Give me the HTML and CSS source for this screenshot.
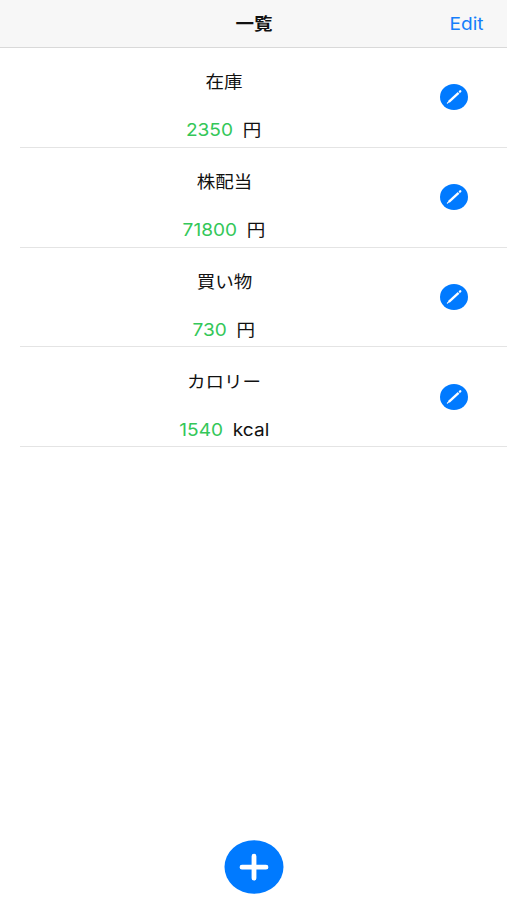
FILE: index.html
```html
<!DOCTYPE html>
<html lang="ja">
<head>
    <meta charset="UTF-8">
    <meta name="viewport" content="width=device-width, initial-scale=1.0">
    <title>一覧</title>
    <link rel="stylesheet" href="styles.css">
</head>
<body>
    <header class="navbar">
        <h1 class="title">一覧</h1>
        <a class="edit">Edit</a>
    </header>
    <ul class="list">
        <li class="item">
            <div class="info">
                <p class="name">在庫</p>
                <p class="amount"><span class="number">2350</span><span>円</span></p>
            </div>
            <svg class="pencil" viewBox="0 0 28 26"><ellipse cx="14" cy="13" rx="14" ry="13"/><path class="body" d="M8.8 17.8L18.6 8.8"/><path class="tip" d="M7.4 19.2L9 17.6"/><path class="eraser" d="M19.9 7.6L20.3 7.2"/></svg>
        </li>
        <li class="item">
            <div class="info">
                <p class="name">株配当</p>
                <p class="amount"><span class="number">71800</span><span>円</span></p>
            </div>
            <svg class="pencil" viewBox="0 0 28 26"><ellipse cx="14" cy="13" rx="14" ry="13"/><path class="body" d="M8.8 17.8L18.6 8.8"/><path class="tip" d="M7.4 19.2L9 17.6"/><path class="eraser" d="M19.9 7.6L20.3 7.2"/></svg>
        </li>
        <li class="item">
            <div class="info">
                <p class="name">買い物</p>
                <p class="amount"><span class="number">730</span><span>円</span></p>
            </div>
            <svg class="pencil" viewBox="0 0 28 26"><ellipse cx="14" cy="13" rx="14" ry="13"/><path class="body" d="M8.8 17.8L18.6 8.8"/><path class="tip" d="M7.4 19.2L9 17.6"/><path class="eraser" d="M19.9 7.6L20.3 7.2"/></svg>
        </li>
        <li class="item">
            <div class="info">
                <p class="name">カロリー</p>
                <p class="amount"><span class="number">1540</span><span class="unit-latin">kcal</span></p>
            </div>
            <svg class="pencil" viewBox="0 0 28 26"><ellipse cx="14" cy="13" rx="14" ry="13"/><path class="body" d="M8.8 17.8L18.6 8.8"/><path class="tip" d="M7.4 19.2L9 17.6"/><path class="eraser" d="M19.9 7.6L20.3 7.2"/></svg>
        </li>
    </ul>
    <footer class="bottom">
        <svg class="add" viewBox="0 0 60 54"><ellipse cx="30" cy="27" rx="29.5" ry="26.7"/><path d="M18 27.2H42M30 16.2V38.2"/></svg>
    </footer>
</body>
</html>
```

FILE: styles.css
```css
* {
    box-sizing: border-box;
}

body {
    display: flex;
    flex-direction: column;
    height: 100vh;
    margin: 0;
    background-color: #fff;
    color: #111;
    font-family: Inter, "Noto Sans CJK JP", sans-serif;
    font-size: 17px;
    line-height: 24px;
}

.navbar {
    display: grid;
    grid-template-columns: 1fr auto 1fr;
    align-items: center;
    height: 48px;
    padding: 1px 25px 0 26px;
    background-color: #f7f7f7;
    border-bottom: 1px solid #d9d9d9;
}

.title {
    grid-column: 2;
    margin: 0;
    font-size: 17px;
    font-weight: bold;
    transform: scaleX(1.09);
}

.edit {
    justify-self: end;
    color: #157efb;
    font-size: 17.5px;
    transform: scaleX(1.09);
}

.list {
    flex: 1;
    margin: 0;
    padding: 0 0 0 20px;
    list-style: none;
}

.item {
    display: flex;
    align-items: center;
    height: 99.8px;
    border-bottom: 1px solid #e4e4e4;
}

.info {
    display: flex;
    flex-direction: column;
    align-items: center;
    gap: 24px;
    width: 408px;
    padding-top: 18px;
}

.name,
.amount {
    margin: 0;
    transform: scaleX(1.09);
}

.amount {
    display: flex;
    gap: 9px;
}

.number {
    color: #34c759;
}

.number,
.unit-latin {
    font-size: 17.5px;
}

.pencil {
    width: 28px;
    height: 26px;
    margin-left: 12px;
    fill: #007aff;
    stroke-linecap: round;
}

.pencil .body {
    stroke: #fff;
    stroke-width: 2.4;
    stroke-linecap: butt;
}

.pencil .tip {
    stroke: #fff;
    stroke-width: 1.2;
}

.pencil .eraser {
    stroke: #fff;
    stroke-width: 2.3;
}

.bottom {
    display: flex;
    justify-content: center;
    padding-bottom: 6px;
}

.add {
    width: 60px;
    height: 54px;
    fill: #007aff;
}

.add path {
    stroke: #fff;
    stroke-width: 4.8;
    stroke-linecap: round;
}
```
